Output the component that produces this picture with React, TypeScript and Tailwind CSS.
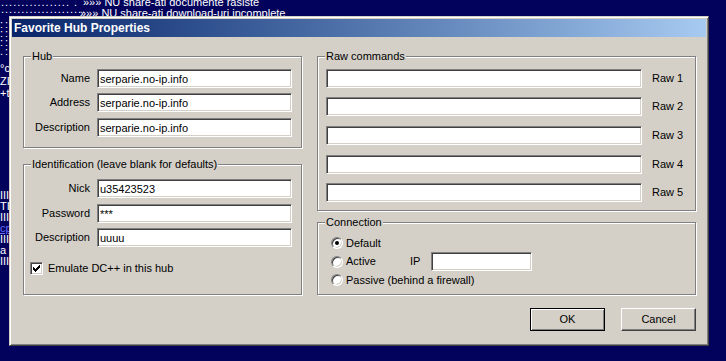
import React from 'react';

const sunken =
    'bg-white border border-t-[#808080] border-l-[#808080] border-b-white border-r-white shadow-[inset_1px_1px_0_#404040,inset_-1px_-1px_0_#d4d0c8]';

const Field = ({ value = '', className = '' }: { value?: string; className?: string }) => (
    <input
        readOnly
        value={value}
        className={`${sunken} px-[2px] text-[11px] text-black outline-none ${className}`}
    />
);

const Group = ({ label, className = '', children }: { label: string; className?: string; children: React.ReactNode }) => (
    <div className={`relative border border-[#808080] shadow-[inset_1px_1px_0_white,1px_1px_0_white] ${className}`}>
        <span className="absolute left-[7px] top-[-7px] px-[1px] bg-[#d4d0c8] leading-[13px]">{label}</span>
        {children}
    </div>
);

const Row = ({ label, value, className = '' }: { label: string; value: string; className?: string }) => (
    <div className={`flex items-center h-[19px] ${className}`}>
        <span className="w-[66px] text-right">{label}</span>
        <Field value={value} className="ml-[7px] w-[195px] h-[19px]" />
    </div>
);

const Radio = ({ checked = false }: { checked?: boolean }) => (
    <div className="w-[12px] h-[12px] rounded-full bg-white border border-t-[#808080] border-l-[#808080] border-b-white border-r-white shadow-[inset_1px_1px_0_#404040,inset_-1px_-1px_0_#d4d0c8] flex items-center justify-center">
        {checked && <div className="w-[4px] h-[4px] rounded-full bg-black" />}
    </div>
);

const checkCols = [2, 3, 4, 3, 2, 1, 0];

export default function App() {
    return (
        <div className="relative w-[726px] h-[361px] overflow-hidden bg-[#02025c] text-white text-[11px] font-['Liberation_Sans',Arial,sans-serif]">
            {/* chat text behind the dialog */}
            <div className="flex flex-col leading-[11px]">
                <div className="flex h-[11px] mt-[-3px] whitespace-nowrap">
                    <span className="w-[83px] pl-[1px] tracking-[1px]">.................  .</span>
                    <span>»»» NU share-ati documente rasiste</span>
                </div>
                <div className="flex h-[11px] whitespace-nowrap">
                    <span className="w-[80px] pl-[1px] tracking-[1px] -translate-y-[4px]">.....................</span>
                    <span>»»» NU share-ati download-uri incomplete</span>
                </div>
                <div className="h-[9px] leading-[9px] mt-[1px] tracking-[2px]">::::::</div>
                <div className="h-[9px] leading-[9px] tracking-[2px]">::::::</div>
                <div className="h-[9px] leading-[9px] tracking-[2px]">::::::</div>
                <div className="h-[9px] leading-[9px] tracking-[2px]">.::::</div>
                <div className="h-[11px] mt-[7px]">°c</div>
                <div className="h-[11px] mt-[2px]">ZI</div>
                <div className="h-[11px] mt-[1px]">+t</div>
                <div className="h-[11px] mt-[91px]">IIII</div>
                <div className="h-[11px]">TI</div>
                <div className="h-[11px]">IIII</div>
                <div className="h-[11px] text-[#6a6aff] underline">cp</div>
                <div className="h-[11px]">IIII</div>
                <div className="h-[11px]">a a</div>
                <div className="h-[11px]">IIII</div>
            </div>

            {/* dialog window */}
            <div className="absolute left-[9px] top-[16px] w-[700px] h-[330px] flex flex-col p-[2px] bg-[#d4d0c8] text-black border border-t-[#d4d0c8] border-l-[#d4d0c8] border-b-[#404040] border-r-[#404040] shadow-[inset_1px_1px_0_white,inset_-1px_-1px_0_#808080]">
                <div className="h-[18px] flex items-center pl-[2px] bg-linear-to-r from-[#0a246a] to-[#a6caf0] text-white font-bold text-[12px]">
                    Favorite Hub Properties
                </div>

                <div className="flex pl-[11px] pt-[19px]">
                    {/* left column */}
                    <div className="w-[280px] flex flex-col">
                        <Group label="Hub" className="w-[279px] h-[92px] pt-[12px]">
                            <Row label="Name" value="serparie.no-ip.info" />
                            <Row label="Address" value="serparie.no-ip.info" className="mt-[5px]" />
                            <Row label="Description" value="serparie.no-ip.info" className="mt-[6px]" />
                        </Group>

                        <Group label="Identification (leave blank for defaults)" className="w-[279px] h-[131px] mt-[16px] pt-[14px]">
                            <Row label="Nick" value="u35423523" />
                            <Row label="Password" value="***" className="mt-[6px]" />
                            <Row label="Description" value="uuuu" className="mt-[5px]" />
                            <div className="flex items-center h-[13px] mt-[15px] pl-[6px]">
                                <div className={`${sunken} w-[13px] h-[13px] flex items-center justify-center`}>
                                    <svg width="9" height="9" viewBox="0 0 9 9" shapeRendering="crispEdges">
                                        {checkCols.map((top, c) => (
                                            <rect key={c} x={1 + c} y={top + 1} width="1" height="3" fill="black" />
                                        ))}
                                    </svg>
                                </div>
                                <span className="ml-[5px]">Emulate DC++ in this hub</span>
                            </div>
                        </Group>
                    </div>

                    {/* right column */}
                    <div className="ml-[14px] w-[380px] flex flex-col">
                        <Group label="Raw commands" className="w-[379px] h-[155px] pt-[12px] pl-[8px]">
                            {[1, 2, 3, 4, 5].map((n, i) => (
                                <div
                                    key={n}
                                    className={`flex items-center h-[19px] ${i === 0 ? '' : i === 1 || i === 4 ? 'mt-[9px]' : 'mt-[10px]'}`}
                                >
                                    <Field className="w-[316px] h-[19px]" />
                                    <span className="ml-[10px]">Raw {n}</span>
                                </div>
                            ))}
                        </Group>

                        <Group label="Connection" className="w-[379px] h-[73px] mt-[11px] pt-[11px] pl-[13px]">
                            <div className="flex items-center h-[18px]">
                                <Radio checked />
                                <span className="ml-[3px]">Default</span>
                            </div>
                            <div className="flex items-center h-[19px]">
                                <Radio />
                                <span className="ml-[3px] w-[64px]">Active</span>
                                <span className="w-[21px]">IP</span>
                                <Field className="w-[101px] h-[19px]" />
                            </div>
                            <div className="flex items-center h-[18px]">
                                <Radio />
                                <span className="ml-[3px]">Passive (behind a firewall)</span>
                            </div>
                        </Group>

                        <div className="flex justify-end gap-[16px] w-[379px] mt-[13px]">
                            <button className="w-[75px] h-[23px] bg-[#d4d0c8] border border-black shadow-[inset_1px_1px_0_white,inset_-1px_-1px_0_#808080]">
                                OK
                            </button>
                            <button className="w-[75px] h-[23px] bg-[#d4d0c8] border border-t-white border-l-white border-b-[#404040] border-r-[#404040] shadow-[inset_-1px_-1px_0_#808080]">
                                Cancel
                            </button>
                        </div>
                    </div>
                </div>
            </div>
        </div>
    );
}
